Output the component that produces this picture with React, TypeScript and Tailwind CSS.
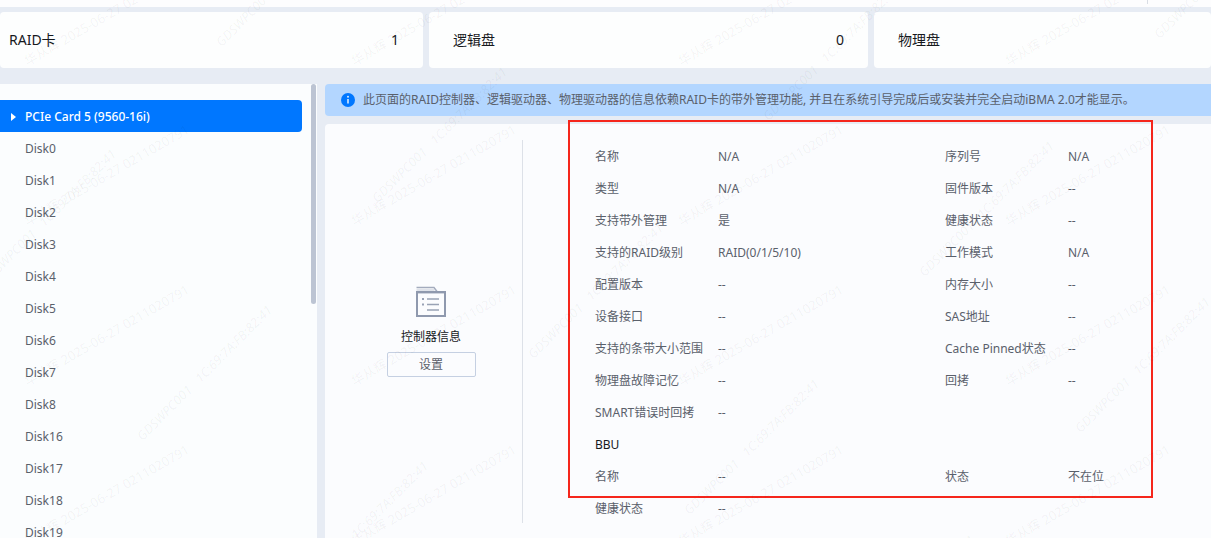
import React from "react";

const disks = [0, 1, 2, 3, 4, 5, 6, 7, 8, 16, 17, 18, 19].map((n) => `Disk${n}`);

const summary = [
  { label: "RAID卡", value: "1", pad: "pl-[9px] pr-6" },
  { label: "逻辑盘", value: "0", pad: "px-6" },
  { label: "物理盘", value: "", pad: "px-6" },
];

type Pair = [string, string] | null;

const controllerRows: [Pair, Pair][] = [
  [["名称", "N/A"], ["序列号", "N/A"]],
  [["类型", "N/A"], ["固件版本", "--"]],
  [["支持带外管理", "是"], ["健康状态", "--"]],
  [["支持的RAID级别", "RAID(0/1/5/10)"], ["工作模式", "N/A"]],
  [["配置版本", "--"], ["内存大小", "--"]],
  [["设备接口", "--"], ["SAS地址", "--"]],
  [["支持的条带大小范围", "--"], ["Cache Pinned状态", "--"]],
  [["物理盘故障记忆", "--"], ["回拷", "--"]],
  [["SMART错误时回拷", "--"], null],
];

const bbuRows: [Pair, Pair][] = [
  [["名称", "--"], ["状态", "不在位"]],
  [["健康状态", "--"], null],
];

const userMarks: { x: number; y: number }[] = [];
for (let col = -1; col < 4; col++) {
  for (let row = 0; row < 5; row++) {
    userMarks.push({ x: 25 + col * 327, y: 62 + row * 160 });
  }
}

const hostMarks: { x: number; y: number }[] = [];
for (let i = -3; i < 5; i++) {
  for (let j = -2; j < 4; j++) {
    const x = 218 + i * 156 + j * 391;
    const y = 44 + i * 156 - j * 82;
    if (x > -140 && x < 1211 && y > 0 && y < 680) hostMarks.push({ x, y });
  }
}

function Watermark() {
  return (
    <div
      aria-hidden="true"
      className="pointer-events-none absolute inset-0 overflow-hidden leading-4 whitespace-pre text-black/5"
    >
      {userMarks.map((m) => (
        <span
          key={`u${m.x}-${m.y}`}
          className="absolute origin-left -rotate-30 text-[13px]"
          style={{ left: m.x, top: m.y - 8 }}
        >
          华从辉 2025-06-27 0211020791
        </span>
      ))}
      {hostMarks.map((m) => (
        <span
          key={`h${m.x}-${m.y}`}
          className="absolute origin-left -rotate-45 text-[13px] italic"
          style={{ left: m.x, top: m.y - 8 }}
        >
          {"GDSWPC001   1C:69:7A:FB:82:41"}
        </span>
      ))}
    </div>
  );
}

function FieldRow({ pairs }: { pairs: [Pair, Pair] }) {
  return (
    <div className="grid grid-cols-[350px_1fr]">
      {pairs.map((p, i) =>
        p ? (
          <dl key={p[0]} className="grid grid-cols-[123px_1fr] whitespace-nowrap">
            <dt>{p[0]}</dt>
            <dd>{p[1]}</dd>
          </dl>
        ) : (
          <div key={i} />
        )
      )}
    </div>
  );
}

function ControllerIcon() {
  return (
    <svg width="30" height="31" viewBox="0 0 30 31" fill="none" aria-hidden="true">
      <path d="M0.5 1.5H18l3 4" stroke="#a3abbd" strokeWidth="1.4" />
      <path d="M0.5 4h18" stroke="#c3c9d6" strokeWidth="1" />
      <rect x="1" y="6" width="28" height="24" stroke="#8f99ae" strokeWidth="2" />
      <path d="M0 6.2h30" stroke="#8f99ae" strokeWidth="2.4" />
      <path d="M11 13h12M11 18.5h12M11 24h12" stroke="#99a2b5" strokeWidth="1.6" />
      <path d="M6 13h2M6 18.5h2" stroke="#99a2b5" strokeWidth="2" />
    </svg>
  );
}

export default function App() {
  return (
    <div className="relative flex h-screen flex-col overflow-hidden bg-[#e7ecf4] font-['Noto_Sans','Noto_Sans_CJK_SC',sans-serif] text-xs text-[#5a606b]">
      <header className="h-[7px] shrink-0 bg-[#fdfdfe]">
        <div className="ml-auto mr-[63px] h-1 w-px bg-[#d9dde4]" />
      </header>

      <section className="mt-[5px] grid shrink-0 grid-cols-[423fr_439fr_337fr] gap-1.5">
        {summary.map((s) => (
          <div
            key={s.label}
            className={`flex h-14 items-center justify-between rounded-sm bg-[#fdfefe] text-sm text-[#17191d] ${s.pad}`}
          >
            <span>{s.label}</span>
            <span>{s.value}</span>
          </div>
        ))}
      </section>

      <div className="mt-4 flex min-h-0 flex-1 gap-2">
        <nav className="relative w-[317px] shrink-0 overflow-hidden bg-[#fbfdfe] pt-4">
          <button
            type="button"
            className="flex h-8 w-[302px] items-center rounded-r bg-[#0077ff] pt-0.5 pl-[11px] text-left font-medium text-white"
          >
            <svg width="5" height="8" viewBox="0 0 5 8" className="mr-[9px]" aria-hidden="true">
              <path d="M0 0l5 4-5 4z" fill="currentColor" />
            </svg>
            PCIe Card 5 (9560-16i)
          </button>
          <ul className="pt-px leading-8">
            {disks.map((d) => (
              <li key={d}>
                <a href="#" className="block pl-[25px]">
                  {d}
                </a>
              </li>
            ))}
          </ul>
          <div className="absolute top-0 right-px h-[220px] w-[5px] rounded-full bg-[#bcc4d3]" />
        </nav>

        <main className="flex min-w-0 flex-1 flex-col gap-2">
          <div className="flex h-8 shrink-0 items-center gap-2 rounded-l-sm bg-[#b3d6ff] pl-4 whitespace-nowrap">
            <svg width="14" height="14" viewBox="0 0 14 14" aria-hidden="true">
              <circle cx="7" cy="7" r="7" fill="#0077ff" />
              <path d="M7 6v4.5" stroke="#d9ebff" strokeWidth="1.6" />
              <circle cx="7" cy="3.8" r="1" fill="#d9ebff" />
            </svg>
            <p>
              此页面的RAID控制器、逻辑驱动器、物理驱动器的信息依赖RAID卡的带外管理功能, 并且在系统引导完成后或安装并完全启动iBMA
              2.0才能显示。
            </p>
          </div>

          <section className="flex min-h-0 flex-1 items-start rounded-tl bg-[#fbfcfe] pt-4">
            <div className="flex h-[383px] w-[198px] shrink-0 flex-col items-center justify-center border-r border-[#dde1e8] pl-[15px]">
              <ControllerIcon />
              <h2 className="mt-3 leading-4 text-[#17191d]">控制器信息</h2>
              <button
                type="button"
                className="mt-[7px] h-[25px] w-[89px] rounded-xs border border-[#c5d0e2]"
              >
                设置
              </button>
            </div>
            <div className="relative min-w-0 flex-1 pt-px pl-[72px] leading-8">
              {controllerRows.map((r, i) => (
                <FieldRow key={i} pairs={r} />
              ))}
              <h3 className="text-[#17191d]">BBU</h3>
              {bbuRows.map((r, i) => (
                <FieldRow key={i} pairs={r} />
              ))}
              <div className="pointer-events-none absolute -top-5 left-[45px] h-[378px] w-[585px] border-2 border-[#f5261c]" />
            </div>
          </section>
        </main>
      </div>

      <Watermark />
    </div>
  );
}
